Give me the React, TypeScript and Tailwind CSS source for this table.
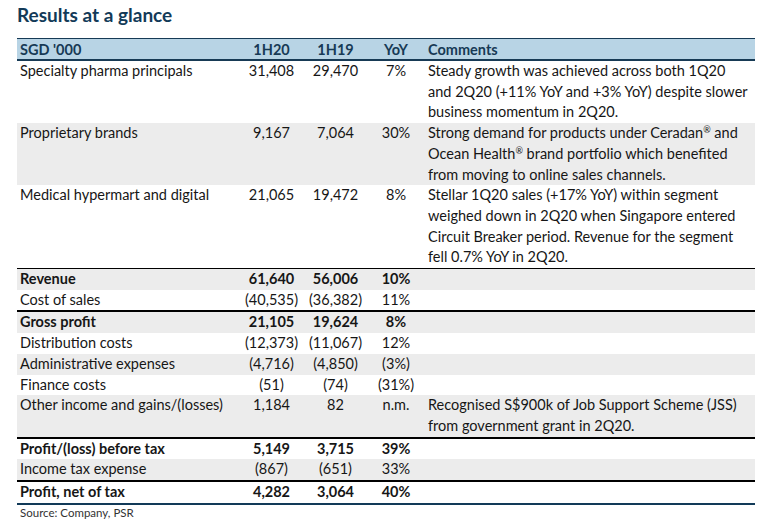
import React from 'react'

type Row = {
  label: string
  a: string
  b: string
  yoy: string
  comment?: React.ReactNode[]
  bold?: boolean
  gray?: boolean
  border?: string
}

const Reg = () => <span className="text-[9px] align-[5px] leading-none">®</span>

const ROWS: Row[] = [
  {
    label: 'Specialty pharma principals', a: '31,408', b: '29,470', yoy: '7%',
    comment: ['Steady growth was achieved across both 1Q20', 'and 2Q20 (+11% YoY and +3% YoY) despite slower', 'business momentum in 2Q20.'],
  },
  {
    label: 'Proprietary brands', a: '9,167', b: '7,064', yoy: '30%', gray: true,
    comment: [
      <>Strong demand for products under Ceradan<Reg /> and</>,
      <>Ocean Health<Reg /> brand portfolio which benefited</>,
      'from moving to online sales channels.',
    ],
  },
  {
    label: 'Medical hypermart and digital', a: '21,065', b: '19,472', yoy: '8%',
    comment: ['Stellar 1Q20 sales (+17% YoY) within segment', 'weighed down in 2Q20 when Singapore entered', 'Circuit Breaker period. Revenue for the segment', 'fell 0.7% YoY in 2Q20.'],
  },
  { label: 'Revenue', a: '61,640', b: '56,006', yoy: '10%', bold: true, gray: true, border: 'border-t border-black' },
  { label: 'Cost of sales', a: '(40,535)', b: '(36,382)', yoy: '11%' },
  { label: 'Gross profit', a: '21,105', b: '19,624', yoy: '8%', bold: true, gray: true, border: 'border-t-2 border-black' },
  { label: 'Distribution costs', a: '(12,373)', b: '(11,067)', yoy: '12%' },
  { label: 'Administrative expenses', a: '(4,716)', b: '(4,850)', yoy: '(3%)', gray: true },
  { label: 'Finance costs', a: '(51)', b: '(74)', yoy: '(31%)' },
  {
    label: 'Other income and gains/(losses)', a: '1,184', b: '82', yoy: 'n.m.', gray: true,
    comment: ['Recognised S$900k of Job Support Scheme (JSS)', 'from government grant in 2Q20.'],
  },
  { label: 'Profit/(loss) before tax', a: '5,149', b: '3,715', yoy: '39%', bold: true, border: 'border-t-2 border-black' },
  { label: 'Income tax expense', a: '(867)', b: '(651)', yoy: '33%', gray: true },
  { label: 'Profit, net of tax', a: '4,282', b: '3,064', yoy: '40%', bold: true, border: 'border-t-2 border-black' },
]

function TableRow({ row }: { row: Row }) {
  return (
    <div
      className={`grid grid-cols-[223px_63px_65px_56px_1fr] leading-[20.7px] ${row.gray ? 'bg-[#ececec]' : 'bg-white'} ${row.bold ? 'font-bold' : ''} ${row.border || ''}`}
    >
      <div className="pl-[3px] whitespace-nowrap">{row.label}</div>
      <div className="text-center whitespace-nowrap">{row.a}</div>
      <div className="text-center whitespace-nowrap">{row.b}</div>
      <div className="text-center whitespace-nowrap">{row.yoy}</div>
      <div className="pl-[4px]">
        {(row.comment || []).map((l, i) => (
          <div key={i} className="whitespace-nowrap">{l}</div>
        ))}
      </div>
    </div>
  )
}

export default function App() {
  return (
    <div className="w-[763px] h-[530px] bg-white text-[#161616] font-['Lato','Liberation_Sans',sans-serif] overflow-hidden">
      <h1 className="pl-[17px] pt-[3px] text-[19px] leading-[24px] font-bold text-[#123a58]">Results at a glance</h1>

      <div className="ml-[17px] w-[738px] mt-[11px] text-[14.5px]">
        <div className="grid grid-cols-[223px_63px_65px_56px_1fr] leading-[19px] pt-px bg-[#b8d4e5] border-t border-[#173a55] border-b-2 border-b-[#173a55] font-bold text-[#173a55]">
          <div className="pl-[3px]">SGD '000</div>
          <div className="text-center">1H20</div>
          <div className="text-center">1H19</div>
          <div className="text-center">YoY</div>
          <div className="pl-[4px]">Comments</div>
        </div>

        {ROWS.map((r, i) => <TableRow key={i} row={r} />)}

        <div className="border-t-2 border-[#123a58]" />
        <div className="pl-[3px] pt-px text-[11.5px] leading-[14px] text-[#333]">Source: Company, PSR</div>
      </div>
    </div>
  )
}
